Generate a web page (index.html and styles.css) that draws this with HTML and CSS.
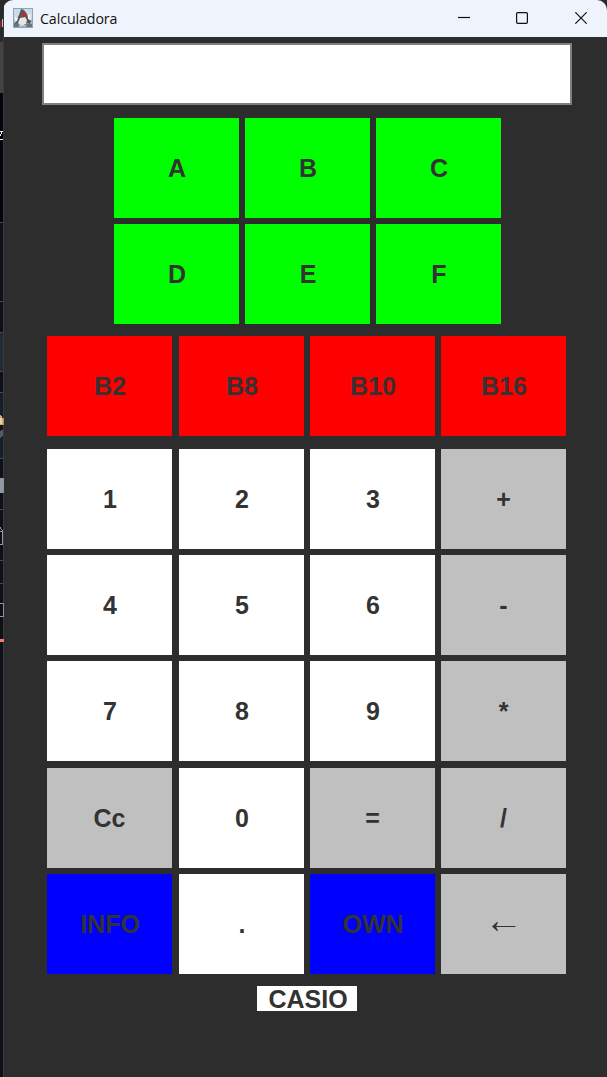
FILE: index.html
```html
<!DOCTYPE html>
<html lang="es">
<head>
<meta charset="utf-8">
<title>Calculadora</title>
<link rel="stylesheet" href="styles.css">
</head>
<body>
<div class="desktop">
  <!-- sliver of the editor behind the window -->
  <svg class="backdrop" width="12" height="1077" viewBox="0 0 12 1077" shape-rendering="crispEdges">
    <rect width="12" height="42" fill="#2a2a2a"/>
    <rect y="21" width="2" height="6" fill="#8c1d22"/>
    <rect x="2" y="19" width="2" height="8" fill="#9cc4e8"/>
    <rect y="42" width="4" height="51" fill="#434343"/>
    <rect y="93" width="4" height="129" fill="#010409"/>
    <path d="M0 131.500H3M0 139.500H4M2 132L0 136" stroke="#f0f0f0" fill="none"/>
    <rect y="222" width="4" height="855" fill="#0d1117"/>
    <rect y="332" width="4" height="40" fill="#222a34"/>
    <rect y="393" width="4" height="65" fill="#151f2b"/>
    <path d="M0 222.500H4M0 301.500H4M0 332.500H4M0 371.500H4M0 392.500H4M0 458.500H4M0 509.500H4M0 560.500H4M0 583.500H4" stroke="#434852"/>
    <path d="M0 415Q4 418 4 425H0Z" fill="#dba55c"/>
    <rect y="418" width="2" height="6" fill="#d9d2c4"/>
    <rect y="425" width="3" height="5" fill="#17150f"/>
    <path d="M0 431L4 429V434L0 438Z" fill="#555b58"/>
    <rect y="478" width="4" height="15" fill="#9198a1"/>
    <path d="M0 527.500L2.500 530.500V544.500H0M0 531.500H3M0 603.500H4M0 616.500H4" stroke="#9198a1" fill="none"/>
    <rect y="639" width="4" height="3" fill="#f47c6c"/>
  </svg>
  <main class="window">
    <svg class="edge" width="1" height="1077" viewBox="0 0 1 1077" shape-rendering="crispEdges">
      <rect y="12" width="1" height="1065" fill="#38393d"/>
      <rect y="418" width="1" height="7" fill="#b98d55"/>
      <rect y="478" width="1" height="15" fill="#8b919a"/>
      <rect y="603" width="1" height="14" fill="#8b919a"/>
      <rect y="639" width="1" height="3" fill="#f47c6c"/>
    </svg>
    <header class="titlebar">
      <svg class="app-icon" width="20" height="20" viewBox="0 0 20 20">
        <rect x=".5" y=".5" width="19" height="19" fill="#cbdbe8" stroke="#8ea6bb"/>
        <path d="M1 12H19V19H1Z" fill="#a5b4c2"/>
        <path d="M8 1L11 2L14 6L15 10L18 13L17 16L14 15L13 17H6L4 15L2 15L4 11L6 7Z" fill="#55585b"/>
        <path d="M7 10L12 9L14 12L13 16L8 18L5 15Z" fill="#e6e7e5"/>
        <path d="M2 9L5 10L4 13L2 14ZM15 7L18 6L17 12L15 11Z" fill="#eef2f4"/>
        <path d="M1 15H5L6 19H1ZM14 16H19V19H13Z" fill="#68747f"/>
        <circle cx="10.600" cy="7" r="2.300" fill="#d02428"/>
      </svg>
      <span class="title">Calculadora</span>
      <span class="controls">
        <svg width="12" height="12" viewBox="0 0 12 12"><path d="M0 5.500H12"/></svg>
        <svg width="12" height="12" viewBox="0 0 12 12"><rect x=".6" y=".6" width="10.800" height="10.800" rx="1.200"/></svg>
        <svg width="12" height="12" viewBox="0 0 12 12"><path d="M.3 .3L11.700 11.700M11.700 .3L.3 11.700"/></svg>
      </span>
    </header>
    <div class="display"></div>
    <div class="letters">
      <button class="key green">A</button><button class="key green">B</button><button class="key green">C</button>
      <button class="key green">D</button><button class="key green">E</button><button class="key green">F</button>
    </div>
    <div class="bases">
      <button class="key red">B2</button><button class="key red">B8</button><button class="key red">B10</button><button class="key red">B16</button>
    </div>
    <div class="numbers">
      <button class="key">1</button><button class="key">2</button><button class="key">3</button><button class="key gray">+</button>
      <button class="key">4</button><button class="key">5</button><button class="key">6</button><button class="key gray">-</button>
      <button class="key">7</button><button class="key">8</button><button class="key">9</button><button class="key gray">*</button>
      <button class="key gray">Cc</button><button class="key">0</button><button class="key gray">=</button><button class="key gray">/</button>
      <button class="key blue">INFO</button><button class="key">.</button><button class="key blue">OWN</button>
      <button class="key gray" aria-label="Borrar"><svg class="arrow" width="24" height="10" viewBox="0 0 24 10"><path d="M2 5.500H23.500" stroke="#333" fill="none"/><path d="M0 5.500L5 1H6L4 5.500L6 10H5Z" fill="#333"/></svg></button>
    </div>
    <div class="brand">CASIO</div>
  </main>
</div>
</body>
</html>
```
FILE: styles.css
```css
* { box-sizing: border-box; }
body { margin: 0; background: #2a2a2a; overflow: hidden; }
.desktop { display: flex; width: 607px; height: 1077px; }
.backdrop { display: block; flex: none; margin-right: -9px; }
.window {
  position: relative;
  width: 604px;
  height: 1077px;
  padding-left: 1px;
  border-radius: 10px 10px 0 0;
  overflow: hidden;
  background: #2d2d2d;
  display: flex;
  flex-direction: column;
}
.edge { position: absolute; left: 0; top: 0; }
.titlebar {
  height: 37px;
  flex: none;
  display: flex;
  align-items: center;
  padding: 0 20px 0 9px;
  background: #eff3fb;
}
.app-icon { margin-top: -1px; }
.title {
  margin-left: 7px;
  font: 14.2px/20px "Open Sans", "Noto Sans", sans-serif;
  letter-spacing: -0.08px;
  color: #111;
}
.controls { margin-left: auto; display: flex; gap: 46px; margin-top: -1px; }
.controls svg { display: block; fill: none; stroke: #111; stroke-width: 1.2; }
.controls svg:last-child { margin-left: 1px; }
.display {
  flex: none;
  width: 530px;
  height: 62px;
  margin: 6px 0 0 38px;
  border: 2px solid #808080;
  background: #fff;
}
.letters {
  display: grid;
  grid-template-columns: repeat(3, 125px);
  gap: 6px;
  margin: 13px 0 0 110px;
}
.bases, .numbers {
  display: grid;
  grid-template-columns: 126px repeat(3, 125px);
  gap: 6px;
  margin-left: 43px;
}
.bases { margin-top: 12px; }
.numbers {
  margin-top: 13px;
  grid-template-rows: 100px 100px 101px 100px 100px;
}
.key {
  width: 125px;
  height: 100px;
  padding: 0 0 0 1px;
  border: 0;
  background: #fff;
  color: #333;
  font: bold 25px/29px "Liberation Sans", Arial, sans-serif;
}
.green { background: #0f0; }
.red { background: #f00; }
.gray { background: #c0c0c0; padding: 0; }
.blue { background: #00f; }
.arrow { display: block; margin: 4px auto 0; }
.brand {
  width: 100px;
  height: 25px;
  margin: 12px 0 0 253px;
  padding-left: 2px;
  background: #fff;
  color: #333;
  font: bold 25px/27px "Liberation Sans", Arial, sans-serif;
  text-align: center;
}
```
